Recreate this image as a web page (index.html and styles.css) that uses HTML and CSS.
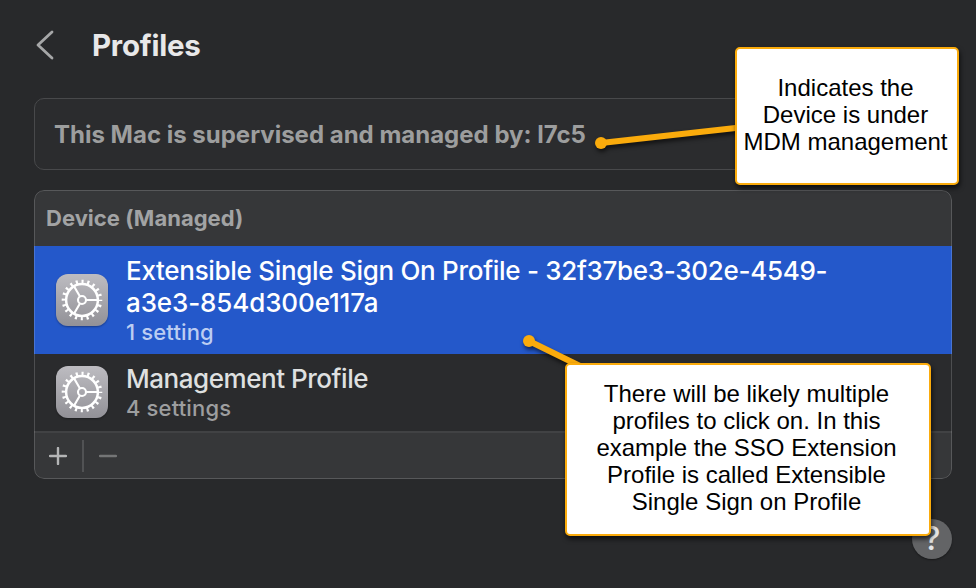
FILE: index.html
```html
<!DOCTYPE html>
<html lang="en">
<head>
<meta charset="utf-8">
<title>Profiles</title>
<link rel="stylesheet" href="styles.css">
</head>
<body>
<svg class="defs" width="0" height="0" aria-hidden="true">
  <symbol id="gear" viewBox="0 0 52 52">
    <g fill="none" stroke="#fff">
      <circle cx="26" cy="26" r="18.3" stroke-width="4" stroke-dasharray="2.1 3.649" stroke-dashoffset="1.05"/>
      <circle cx="26" cy="26" r="15.9" stroke-width="2.5"/>
      <circle cx="26" cy="26" r="4" stroke-width="2.1"/>
      <path d="M30.3 26H41M23.8 22.3L18.3 12.7M23.8 29.7L18.3 39.3" stroke-width="2.1"/>
    </g>
  </symbol>
</svg>
<main class="window">
  <header class="titlebar">
    <svg class="back" width="20" height="32" viewBox="0 0 20 32"><path d="M17 3L3 16L17 29" fill="none" stroke="#a6a7a8" stroke-width="2.8" stroke-linecap="round" stroke-linejoin="round"/></svg>
    <h1 class="title">Profiles</h1>
  </header>
  <section class="notice"><span class="notice-text">This Mac is supervised and managed by: l7c5</span></section>
  <section class="list">
    <h2 class="list-head"><span>Device (Managed)</span></h2>
    <article class="row selected">
      <div class="icon"><svg width="52" height="52"><use href="#gear"/></svg></div>
      <div class="info">
        <div class="name"><span class="line-a">Extensible Single Sign On Profile - 32f37be3-302e-4549-</span><br><span class="line-b">a3e3-854d300e117a</span></div>
        <div class="detail">1 setting</div>
      </div>
    </article>
    <article class="row">
      <div class="icon"><svg width="52" height="52"><use href="#gear"/></svg></div>
      <div class="info">
        <div class="name line-c">Management Profile</div>
        <div class="detail">4 settings</div>
      </div>
    </article>
    <footer class="tools">
      <svg class="plus" width="18" height="18" viewBox="0 0 18 18"><path d="M1 9H17M9 1V17" stroke="#b4b5b6" stroke-width="2.4" stroke-linecap="round"/></svg>
      <i class="divider"></i>
      <svg class="minus" width="18" height="18" viewBox="0 0 18 18"><path d="M1 9H17" stroke="#747576" stroke-width="2.4" stroke-linecap="round"/></svg>
    </footer>
  </section>
  <div class="help">?</div>
  <svg class="pointers" width="976" height="588">
    <g stroke="#faab0c" fill="#faab0c">
      <path d="M601 143L740 127.5M529 341L580 366" stroke-width="6"/>
      <circle cx="601" cy="143" r="6" stroke="none"/>
      <circle cx="529" cy="341" r="6" stroke="none"/>
    </g>
  </svg>
  <aside class="callout callout-mdm">Indicates the<br>Device is under<br>MDM management</aside>
  <aside class="callout callout-sso">There will be likely multiple<br>profiles to click on. In this<br>example the SSO Extension<br>Profile is called Extensible<br>Single Sign on Profile</aside>
</main>
</body>
</html>
```

FILE: styles.css
```css
* { box-sizing: border-box; }
body { margin: 0; background: #28292b; font-family: Inter, "Liberation Sans", sans-serif; }
h1, h2 { margin: 0; }
.defs { position: absolute; }
.window { position: relative; width: 976px; height: 588px; overflow: hidden; padding: 0 24px 0 34px; }
.titlebar { height: 98px; display: flex; align-items: center; padding: 0 0 8px 1px; }
.back { flex: none; }
.title { margin-left: 37px; font-size: 29.5px; line-height: 36px; font-weight: 700; letter-spacing: -0.25px; color: #e8e8e9; }
.notice { height: 72px; border: 1.5px solid #48494b; border-radius: 10px; background: #2b2c2e; padding-left: 19px; display: flex; align-items: center; font-size: 24px; font-weight: 700; letter-spacing: 0; color: #9d9e9e; }
.list { position: relative; margin-top: 20px; height: 289px; border-radius: 10px; background: #2a2b2d; overflow: hidden; display: flex; flex-direction: column; }
.list::after { content: ""; position: absolute; inset: 0; border: 1px solid rgba(255, 255, 255, 0.17); border-radius: 10px; }
.list-head { height: 56px; flex: none; background: #363739; padding-left: 12px; font-size: 22px; line-height: 56px; font-weight: 700; letter-spacing: 0.02px; color: #a2a3a4; }
.row { height: 77px; flex: none; display: flex; align-items: center; padding: 0 0 1px 22px; }
.selected { height: 108px; padding-bottom: 0; background: #2458ca; }
.icon { width: 52px; height: 52px; flex: none; border-radius: 12px; background: linear-gradient(#bdbcc1, #929197); box-shadow: 0 1px 2px #0005; }
.icon svg { display: block; }
.info { margin-left: 18px; white-space: nowrap; }
.name { padding-top: 1px; margin-bottom: -1px; font-size: 26px; line-height: 32px; font-weight: 500; letter-spacing: -0.3px; color: #dfe0e0; }
.line-b { letter-spacing: -0.12px; }
.line-c { letter-spacing: -0.46px; }
.selected .name { color: #fff; }
.detail { font-size: 22px; line-height: 28px; font-weight: 500; letter-spacing: 0.15px; color: #9d9e9f; }
.selected .detail { color: #bccdf2; }
.tools { flex: 1; background: #363739; border-top: 2px solid #414244; display: flex; align-items: center; padding: 0 0 1px 15px; }
.divider { width: 1.5px; height: 32px; margin: 0 15px 0 15px; background: #515254; }
.help { position: absolute; left: 912px; top: 519px; width: 40px; height: 40px; border-radius: 50%; background: #636466; color: #e5e5e6; font-size: 32px; line-height: 40px; font-weight: 500; text-align: center; box-shadow: 0 1px 2px #0006; }
.pointers { position: absolute; left: 0; top: 0; filter: drop-shadow(1px 3px 2px #0009); }
.callout { position: absolute; display: flex; align-items: center; justify-content: center; padding: 0 3px 4px 0; border: 2px solid #faab0c; border-radius: 5px; background: #fff; color: #000; font: 24px/27px "Liberation Sans", Arial, sans-serif; text-align: center; white-space: nowrap; box-shadow: 1px 3px 5px #000a; }
.callout-mdm { left: 735px; top: 47px; width: 224px; height: 138px; }
.callout-sso { left: 565px; top: 363px; width: 366px; height: 173px; }
```
